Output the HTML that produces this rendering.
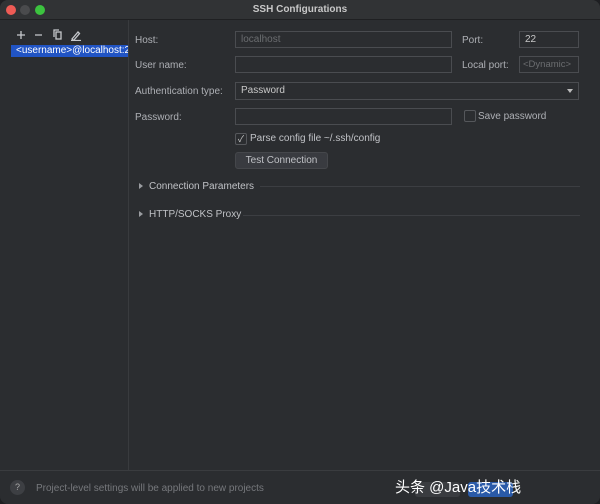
<!DOCTYPE html><html><head><style>
body{margin:0;width:600px;height:504px;background:#1e1f22;font-family:"Liberation Sans","Noto Sans CJK SC",sans-serif;font-size:10px;color:#bcbec4;overflow:hidden}
.win{position:absolute;left:0;top:0;width:600px;height:504px;background:#2b2d30;border-radius:8px;overflow:hidden}
.title{position:absolute;left:0;top:0;width:600px;height:19px;background:#313335;border-bottom:1px solid #1f2022;text-align:center;line-height:19px;font-weight:bold;color:#c8c8c8;font-size:10px}
.dot{position:absolute;top:5px;width:10px;height:10px;border-radius:50%}
.left{position:absolute;left:0;top:20px;width:128px;height:450px;border-right:1px solid #393b3e;background:#2b2d30}
.sel{position:absolute;left:11px;top:45px;width:117px;height:12px;background:#2154c4;color:#fff;font-size:10px;line-height:12px;padding-left:5px;box-sizing:border-box;white-space:nowrap;overflow:hidden}
.lbl{position:absolute;color:#aeb0b5}
.inp{position:absolute;border:1px solid #4a4c50;background:#2b2d30;height:17px;box-sizing:border-box;line-height:15px;padding-left:5px}
.sep{position:absolute;height:1px;background:#3c3e42}
.tri{position:absolute;width:0;height:0;border-left:4px solid #9a9ca0;border-top:3px solid transparent;border-bottom:3px solid transparent}
.bottom{position:absolute;left:0;top:470px;width:600px;height:34px;border-top:1px solid #3a3c3f;background:#2b2d30}
</style></head><body><div class="win">
<div class="title">SSH Configurations</div>
<div class="dot" style="left:6px;background:#ee5b55"></div>
<div class="dot" style="left:20px;background:#4a4b4d"></div>
<div class="dot" style="left:35px;background:#3cc33f"></div>
<div class="left"></div>
<svg style="position:absolute;left:14px;top:29px" width="70" height="12" fill="none" stroke="#c6c8cc" stroke-width="1.3">
<path d="M3 6h8M7 2v8"/><path d="M21 6h7"/><rect x="42" y="3" width="5" height="7"/><path d="M40 8V1h5"/><path d="M58 10l6-7 1.5 1.5-6 7zM57 11.5h10"/></svg>
<div class="sel">&lt;username&gt;@localhost:22</div>
<div class="lbl" style="left:135px;top:35px">Host:</div>
<div class="inp" style="left:235px;top:31px;width:217px;color:#6b6d70">localhost</div>
<div class="lbl" style="left:462px;top:35px">Port:</div>
<div class="inp" style="left:519px;top:31px;width:60px;color:#c8c8c8">22</div>
<div class="lbl" style="left:135px;top:60px">User name:</div>
<div class="inp" style="left:235px;top:56px;width:217px"></div>
<div class="lbl" style="left:462px;top:60px">Local port:</div>
<div class="inp" style="left:519px;top:56px;width:60px;color:#6b6d70;padding-left:3px;font-size:9.5px">&lt;Dynamic&gt;</div>
<div class="lbl" style="left:135px;top:86px">Authentication type:</div>
<div class="inp" style="left:235px;top:82px;width:344px;height:18px;color:#c8c8c8">Password</div>
<div class="tri" style="left:567px;top:89px;border-left:3px solid transparent;border-right:3px solid transparent;border-top:4px solid #bbb;border-bottom:0"></div>
<div class="lbl" style="left:135px;top:112px">Password:</div>
<div class="inp" style="left:235px;top:108px;width:217px"></div>
<div style="position:absolute;left:464px;top:110px;width:10px;height:10px;border:1px solid #55575b;border-radius:2px"></div>
<div class="lbl" style="left:478px;top:111px">Save password</div>
<div style="position:absolute;left:235px;top:133px;width:10px;height:10px;border:1px solid #55575b;border-radius:2px;color:#ccc;font-size:9px;line-height:10px;text-align:center">✓</div>
<div class="lbl" style="left:250px;top:133px;color:#c0c2c6">Parse config file ~/.ssh/config</div>
<div style="position:absolute;left:235px;top:152px;width:93px;height:17px;background:#393b40;border:1px solid #45474b;border-radius:3px;box-sizing:border-box;text-align:center;line-height:15px;color:#c0c2c6">Test Connection</div>
<div class="tri" style="left:139px;top:183px"></div>
<div class="lbl" style="left:149px;top:181px;color:#c0c2c6">Connection Parameters</div>
<div class="sep" style="left:260px;top:186px;width:320px"></div>
<div class="tri" style="left:139px;top:211px"></div>
<div class="lbl" style="left:149px;top:209px;color:#c0c2c6">HTTP/SOCKS Proxy</div>
<div class="sep" style="left:243px;top:215px;width:337px"></div>
<div class="bottom"></div>
<div style="position:absolute;left:10px;top:480px;width:15px;height:15px;border-radius:50%;background:#3d3f43;color:#aaa;text-align:center;line-height:15px;font-size:9px">?</div>
<div class="lbl" style="left:36px;top:483px;color:#76787c">Project-level settings will be applied to new projects</div>
<div style="position:absolute;left:415px;top:482px;width:45px;height:15px;background:#3a3c40;border-radius:3px"></div>
<div style="position:absolute;left:468px;top:482px;width:45px;height:15px;background:#2a5aa8;border-radius:3px"></div>
<div style="position:absolute;left:395px;top:476px;color:#fff;font-size:15px;white-space:nowrap;z-index:5">头条 @Java技术栈</div>
</div></body></html>
